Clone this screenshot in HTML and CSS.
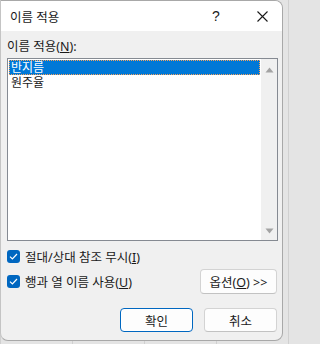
FILE: index.html
```html
<!DOCTYPE html>
<html lang="ko">
<head>
<meta charset="utf-8">
<link rel="stylesheet" href="styles.css">
</head>
<body>
<div class="dialog">
  <div class="titlebar">
    <span class="title">이름 적용</span>
    <span class="help">?</span>
    <span class="close">
      <svg width="11" height="11" viewBox="0 0 11 11"><path d="M0.5 0.5 L10.5 10.5 M10.5 0.5 L0.5 10.5" stroke="#1a1a1a" stroke-width="1.1" fill="none"/></svg>
    </span>
  </div>
  <div class="main">
    <div class="label">이름 적용(<u>N</u>):</div>
    <div class="listbox">
      <div class="items">
        <div class="item selected">반지름</div>
        <div class="item">원주율</div>
      </div>
      <div class="scrollbar">
        <svg width="9" height="6" viewBox="0 0 9 6"><path d="M4.5 0.5 L8.5 5.5 L0.5 5.5 Z" fill="#a3a3a3"/></svg>
        <svg width="9" height="6" viewBox="0 0 9 6"><path d="M0.5 0.5 L8.5 0.5 L4.5 5.5 Z" fill="#a3a3a3"/></svg>
      </div>
    </div>
    <div class="row row1">
      <label class="check"><span class="box"><svg width="9" height="7" viewBox="0 0 9 7"><path d="M1 3.6 L3.4 6 L8 1" stroke="#fff" stroke-width="1.2" fill="none"/></svg></span><span class="text">절대/상대 참조 무시(<u>I</u>)</span></label>
    </div>
    <div class="row row2">
      <label class="check"><span class="box"><svg width="9" height="7" viewBox="0 0 9 7"><path d="M1 3.6 L3.4 6 L8 1" stroke="#fff" stroke-width="1.2" fill="none"/></svg></span><span class="text">행과 열 이름 사용(<u>U</u>)</span></label>
      <button class="btn options"><span>옵션(<u>O</u>) &gt;&gt;</span></button>
    </div>
    <div class="actions">
      <button class="btn default"><span>확인</span></button>
      <button class="btn"><span>취소</span></button>
    </div>
  </div>
</div>
</body>
</html>
```

FILE: styles.css
```css
html, body {
  margin: 0;
  padding: 0;
}
body {
  width: 286px;
  height: 344px;
  overflow: hidden;
  background-color: #e4e4e4;
  background-image:
    linear-gradient(to right, #d0d0d0 1px, transparent 1px);
  background-size: 72px 100%;
  background-position: 0 0;
  font-family: "Noto Sans", "Noto Sans CJK KR", sans-serif;
  font-size: 12px;
  color: #1a1a1a;
}
.dialog {
  width: 283px;
  height: 341px;
  box-sizing: border-box;
  border: 1px solid #a8a8a8;
  border-left-color: #c4c4c4;
  border-radius: 0 8px 8px 8px;
  background: #f0f0f0;
  overflow: hidden;
  display: flex;
  flex-direction: column;
}
.titlebar {
  height: 30px;
  background: #ffffff;
  display: flex;
  align-items: center;
  padding-left: 9px;
  flex-shrink: 0;
}
.title {
  font-size: 12.5px;
  flex: 1;
}
.help {
  font-family: "Liberation Sans", sans-serif;
  font-size: 14px;
  width: 12px;
  margin-right: 35px;
  text-align: center;
}
.close {
  width: 11px;
  height: 11px;
  margin-right: 14px;
  display: flex;
}
.main {
  padding: 0 4px 0 6px;
  display: flex;
  flex-direction: column;
}
.label {
  margin-top: 8px;
  line-height: 16px;
  height: 16px;
  font-size: 12.5px;
}
u {
  text-decoration: underline;
  text-underline-offset: 1px;
}
.listbox {
  margin-top: 3px;
  height: 183px;
  box-sizing: border-box;
  border: 1px solid #858a92;
  background: #ffffff;
  display: flex;
}
.items {
  flex: 1;
  padding: 1px 0 0 1px;
}
.item {
  height: 15px;
  line-height: 15px;
  padding-left: 2px;
  box-sizing: border-box;
  font-size: 12px;
  overflow: hidden;
}
.item.selected {
  background: #0078d7;
  color: #ffffff;
  outline: 1px dotted #f7a35c;
  outline-offset: -1px;
}
.scrollbar {
  width: 16px;
  background: #f0f0f0;
  display: flex;
  flex-direction: column;
  justify-content: space-between;
  align-items: center;
  padding: 8px 0 6px;
  box-sizing: border-box;
  margin-left: 1px;
}
.row {
  display: flex;
  align-items: center;
  justify-content: space-between;
}
.row1 {
  margin-top: 5px;
  height: 20px;
}
.row2 {
  margin-top: 3px;
  height: 25px;
}
.check {
  display: flex;
  align-items: center;
  gap: 5px;
  font-size: 12.5px;
}
.box {
  width: 13px;
  height: 13px;
  border-radius: 3px;
  background: #0067c0;
  display: flex;
  align-items: center;
  justify-content: center;
}
.btn {
  font-family: "Noto Sans", "Noto Sans CJK KR", sans-serif;
  font-size: 12.5px;
  color: #1a1a1a;
  background: #fdfdfd;
  border: 1px solid #d3d3d3;
  border-bottom-color: #c2c2c2;
  border-radius: 4px;
  height: 25px;
  padding: 0;
  box-sizing: border-box;
  display: flex;
  align-items: center;
  justify-content: center;
}
.options {
  width: 77px;
  margin-right: 1px;
}
.actions {
  margin-top: 14px;
  display: flex;
  justify-content: flex-end;
  gap: 11px;
  padding-right: 1px;
}
.actions .btn {
  width: 73px;
  height: 24px;
}
.btn.default {
  border: 1px solid #0067c0;
  box-shadow: inset 0 0 0 1px #ffffff;
}
```
